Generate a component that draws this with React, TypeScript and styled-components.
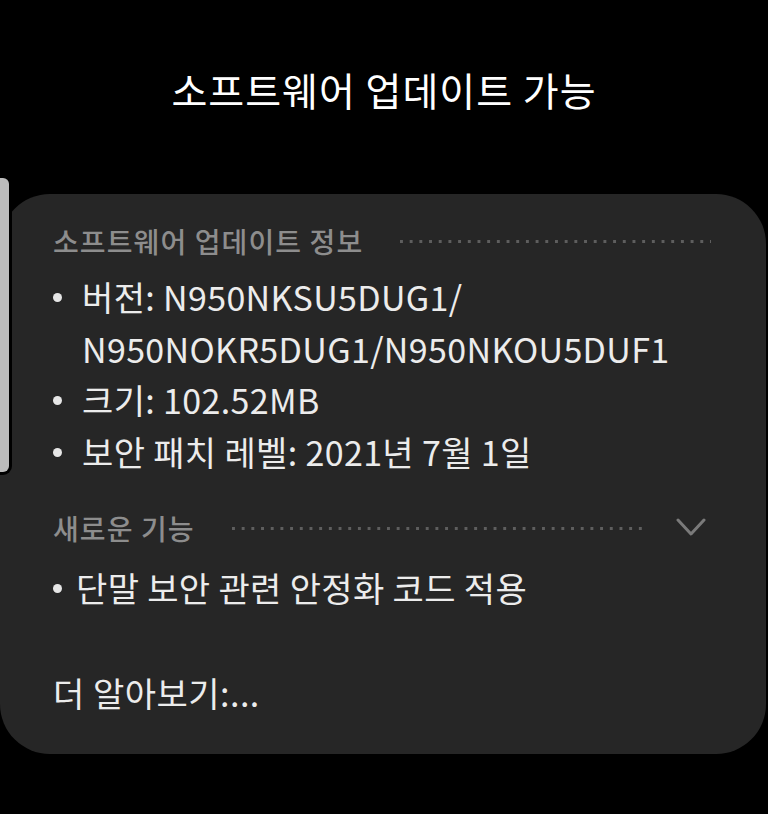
import React from "react";
import styled, { createGlobalStyle } from "styled-components";

const GlobalStyle = createGlobalStyle`
  html, body {
    margin: 0;
    padding: 0;
    background: #000;
  }
  body {
    font-family: "Noto Sans CJK KR", "Noto Sans", sans-serif;
  }
`;

const Screen = styled.div`
  position: relative;
  width: 768px;
  height: 814px;
  background: #000;
  overflow: hidden;
  display: flex;
  flex-direction: column;
`;

const Title = styled.h1`
  margin: 0;
  padding-top: 64px;
  text-align: center;
  color: #ffffff;
  font-size: 39px;
  font-weight: 400;
  line-height: 50px;
  letter-spacing: 1px;
`;

const Card = styled.section`
  margin-top: 80px;
  width: 766px;
  height: 560px;
  box-sizing: border-box;
  background: #262626;
  border-radius: 50px;
  padding: 30px 0 0 53px;
  display: flex;
  flex-direction: column;
`;

const SectionHeader = styled.div<{ $right: number; $gap: number }>`
  display: flex;
  align-items: center;
  height: 34px;
  padding-right: ${(p) => p.$right}px;
  gap: ${(p) => p.$gap}px;
`;

const HeaderText = styled.span`
  color: #8d8d8d;
  font-size: 28px;
  font-weight: 500;
  line-height: 34px;
  letter-spacing: 1.1px;
  white-space: nowrap;
`;

const Dots = styled.span`
  flex: 1;
  height: 3px;
  background-image: linear-gradient(to right, #5e5e5e 0 3px, transparent 3px);
  background-size: 9.7px 3px;
  background-repeat: repeat-x;
`;

const Chevron = styled.svg`
  flex: none;
  width: 30px;
  height: 20px;
  margin-left: -5px;
`;

const List = styled.ul<{ $top: number }>`
  list-style: none;
  margin: ${(p) => p.$top}px 0 0 0;
  padding: 0;
  display: flex;
  flex-direction: column;
`;

const Item = styled.li<{ $col: number }>`
  display: flex;
  align-items: flex-start;
  color: #ececec;
  font-size: 34px;
  line-height: 51.5px;
  &::before {
    content: "";
    flex: none;
    width: 9px;
    height: 9px;
    border-radius: 50%;
    background: #e6e6e6;
    margin: 22px ${(p) => p.$col - 9}px 0 0;
  }
`;

const ItemText = styled.span`
  letter-spacing: 0.35px;
`;

const Section2 = styled.div`
  margin-top: 34px;
`;

const More = styled.p`
  margin: 53px 0 0 0;
  color: #ececec;
  font-size: 34px;
  line-height: 52px;
  letter-spacing: 0.5px;
`;

const ScrollThumb = styled.div`
  position: absolute;
  left: 0;
  top: 178px;
  width: 9px;
  height: 294px;
  background: #bcbcbc;
  border-radius: 0 6px 6px 0;
  box-shadow: 0 0 0 3px #000;
`;

export default function App() {
  return (
    <Screen>
      <GlobalStyle />
      <Title>소프트웨어 업데이트 가능</Title>
      <Card>
        <SectionHeader $right={55} $gap={37}>
          <HeaderText>소프트웨어 업데이트 정보</HeaderText>
          <Dots />
        </SectionHeader>
        <List $top={13}>
          <Item $col={29}>
            <ItemText>
              버전: N950NKSU5DUG1/
              <br />
              N950NOKR5DUG1/N950NKOU5DUF1
            </ItemText>
          </Item>
          <Item $col={29}>
            <ItemText>크기: 102.52MB</ItemText>
          </Item>
          <Item $col={29}>
            <ItemText>보안 패치 레벨: 2021년 7월 1일</ItemText>
          </Item>
        </List>
        <Section2>
          <SectionHeader $right={60} $gap={37}>
            <HeaderText>새로운 기능</HeaderText>
            <Dots />
            <Chevron viewBox="0 0 30 20" fill="none">
              <path
                d="M2 2 L15 16 L28 2"
                stroke="#7a7a7a"
                strokeWidth="3"
                strokeLinecap="round"
                strokeLinejoin="round"
              />
            </Chevron>
          </SectionHeader>
          <List $top={17}>
            <Item $col={23}>
              <ItemText>단말 보안 관련 안정화 코드 적용</ItemText>
            </Item>
          </List>
        </Section2>
        <More>더 알아보기:...</More>
      </Card>
      <ScrollThumb />
    </Screen>
  );
}
